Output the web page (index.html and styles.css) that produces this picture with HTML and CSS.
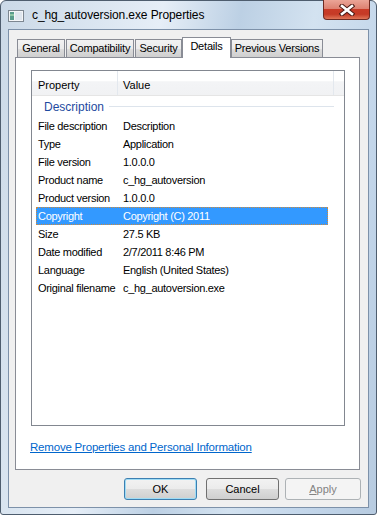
FILE: index.html
```html
<!DOCTYPE html>
<html>
<head lang="en">
    <meta charset="UTF-8">
    <title>c_hg_autoversion.exe Properties</title>
    <link rel="stylesheet" href="styles.css">
</head>
<body>
<div class="window">
    <div class="titlebar">
        <svg class="app-icon" width="16" height="12" viewBox="0 0 16 12">
            <rect x="0.5" y="0.5" width="15" height="11" fill="#f4f6f8" stroke="#7d8791"/>
            <rect x="2" y="2" width="4" height="8" fill="#5a9c8c"/>
            <rect x="2" y="4" width="4" height="2" fill="#8ec7a6"/>
            <rect x="7" y="2" width="7" height="8" fill="#dfe6ee"/>
        </svg>
        <span class="title">c_hg_autoversion.exe Properties</span>
        <div class="close-btn">
            <svg width="16" height="12" viewBox="0 0 16 12">
                <path d="M3 2 L13 10 M13 2 L3 10" stroke="#4d1a14" stroke-width="4.6" stroke-linecap="square"/>
                <path d="M3 2 L13 10 M13 2 L3 10" stroke="#ffffff" stroke-width="2.6" stroke-linecap="square"/>
            </svg>
        </div>
    </div>
    <div class="client">
        <div class="tabs">
            <div class="tab tab-general">General</div>
            <div class="tab tab-compat">Compatibility</div>
            <div class="tab tab-security">Security</div>
            <div class="tab tab-details active">Details</div>
            <div class="tab tab-prev">Previous Versions</div>
        </div>
        <div class="panel">
            <div class="list">
                <div class="list-head">
                    <div class="col-prop">Property</div>
                    <div class="col-value">Value</div>
                    <div class="col-rest"></div>
                </div>
                <div class="group">
                    <span>Description</span>
                    <span class="group-line"></span>
                </div>
                <div class="row"><span class="prop">File description</span><span class="val">Description</span></div>
                <div class="row"><span class="prop">Type</span><span class="val">Application</span></div>
                <div class="row"><span class="prop">File version</span><span class="val">1.0.0.0</span></div>
                <div class="row"><span class="prop">Product name</span><span class="val">c_hg_autoversion</span></div>
                <div class="row"><span class="prop">Product version</span><span class="val">1.0.0.0</span></div>
                <div class="row selected"><span class="prop">Copyright</span><span class="val">Copyright (C) 2011</span></div>
                <div class="row"><span class="prop">Size</span><span class="val">27.5 KB</span></div>
                <div class="row"><span class="prop">Date modified</span><span class="val">2/7/2011 8:46 PM</span></div>
                <div class="row"><span class="prop">Language</span><span class="val">English (United States)</span></div>
                <div class="row"><span class="prop">Original filename</span><span class="val">c_hg_autoversion.exe</span></div>
            </div>
            <a class="remove-link" href="javascript:void(0);">Remove Properties and Personal Information</a>
        </div>
        <div class="buttons">
            <div class="btn btn-default">OK</div>
            <div class="btn btn-cancel">Cancel</div>
            <div class="btn btn-disabled"><u>A</u>pply</div>
        </div>
    </div>
</div>
</body>
</html>
```

FILE: styles.css
```css
html, body {
    margin: 0px;
    padding: 0px;
    background: #ffffff;
}
body {
    font-family: "Liberation Sans", Arial, sans-serif;
    font-size: 11px;
    color: #000000;
}
.window {
    width: 377px;
    height: 515px;
    box-sizing: border-box;
    padding: 0px 7px 7px 7px;
    position: relative;
    border: 1px solid #4e5d6e;
    border-radius: 6px 6px 3px 3px;
    background: linear-gradient(100deg, #cbd9e7 0%, #dbe6f1 22%, #e6eef7 35%, #bcd0e4 52%, #d3e2f0 68%, #c3d6ea 85%, #b7cbe0 100%);
}
.titlebar {
    height: 28px;
    display: flex;
    align-items: center;
}
.app-icon {
    margin-left: 0px;
    margin-top: 1px;
}
.title {
    margin-left: 8px;
    font-size: 12px;
    letter-spacing: -0.1px;
    color: #000000;
}
.close-btn {
    position: absolute;
    top: -1px;
    right: 6px;
    width: 45px;
    height: 19px;
    border: 1px solid #6e2a22;
    border-top: none;
    border-radius: 0px 0px 4px 4px;
    background: linear-gradient(#eba597 0%, #dd8272 45%, #c93b27 50%, #c53a26 75%, #e07658 100%);
    display: flex;
    align-items: center;
    justify-content: center;
}
.client {
    border: 1px solid #7d91a9;
    background: #f0f0f0;
    height: 479px;
    box-sizing: border-box;
    padding: 7px 8px 7px 6px;
}
.tabs {
    display: flex;
    align-items: flex-end;
    height: 21px;
    margin-bottom: -1px;
    padding-left: 2px;
    position: relative;
    z-index: 1;
}
.tab {
    height: 19px;
    box-sizing: border-box;
    border: 1px solid #898c95;
    background: linear-gradient(#f2f2f2, #ebebeb 50%, #dddddd 51%, #cfcfcf);
    text-align: center;
    line-height: 17px;
    margin-right: 1px;
    letter-spacing: -0.2px;
}
.tab-general { width: 48px; }
.tab-compat { width: 68px; }
.tab-security { width: 47px; margin-right: 0px; }
.tab-details { width: 49px; }
.tab-prev { width: 92px; }
.tab.active {
    height: 21px;
    background: #ffffff;
    border-bottom: none;
    margin-right: 0px;
    line-height: 17px;
}
.panel {
    height: 413px;
    box-sizing: border-box;
    border: 1px solid #898c95;
    background: #ffffff;
    padding: 12px 14px 0px 15px;
}
.list {
    height: 356px;
    box-sizing: border-box;
    border: 1px solid #828790;
}
.list-head {
    display: flex;
    height: 25px;
    box-sizing: border-box;
    border-bottom: 1px solid #e5e5e5;
    background: linear-gradient(#ffffff 40%, #f3f4f6 45%, #f1f2f4);
    line-height: 24px;
    padding-top: 2px;
}
.col-prop {
    width: 79px;
    padding-left: 6px;
    border-right: 1px solid #e3e8ee;
    margin-top: -2px;
    padding-top: 2px;
}
.col-value {
    width: 210px;
    padding-left: 5px;
    border-right: 1px solid #e3e8ee;
    margin-top: -2px;
    padding-top: 2px;
}
.col-rest {
    flex: 1;
}
.group {
    display: flex;
    align-items: center;
    height: 21px;
    padding-left: 12px;
    padding-right: 10px;
    font-size: 12px;
    color: #1e4aa0;
}
.group-line {
    flex: 1;
    height: 1px;
    margin-left: 5px;
    background: #dde4ec;
}
.row {
    display: flex;
    width: 292px;
    height: 18px;
    margin-left: 4px;
    box-sizing: border-box;
    line-height: 18px;
    letter-spacing: -0.3px;
}
.row .prop {
    width: 87px;
    padding-left: 2px;
    box-sizing: border-box;
    white-space: nowrap;
}
.row.selected {
    background: #3399ff;
    color: #ffffff;
    outline: 1px dotted #cc8a3e;
    outline-offset: -1px;
}
.remove-link {
    display: inline-block;
    margin-top: 13px;
    margin-left: -1px;
    line-height: 16px;
    font-size: 11.5px;
    color: #0066cc;
    text-decoration: underline;
    letter-spacing: -0.2px;
}
.buttons {
    display: flex;
    justify-content: flex-end;
    margin-top: 8px;
}
.btn {
    width: 73px;
    height: 22px;
    box-sizing: border-box;
    border: 1px solid #707070;
    border-radius: 3px;
    background: linear-gradient(#f2f2f2, #ebebeb 50%, #dddddd 51%, #cfcfcf);
    text-align: center;
    line-height: 20px;
    font-size: 11px;
}
.btn-default {
    margin-right: 9px;
    border-color: #3c7fb1;
    box-shadow: inset 0px 0px 0px 1px #9fdcf5;
}
.btn-cancel {
    margin-right: 6px;
}
.btn-disabled {
    width: 76px;
    margin-right: -1px;
    border-color: #adb2b5;
    background: #f4f4f4;
    color: #838383;
}
```
